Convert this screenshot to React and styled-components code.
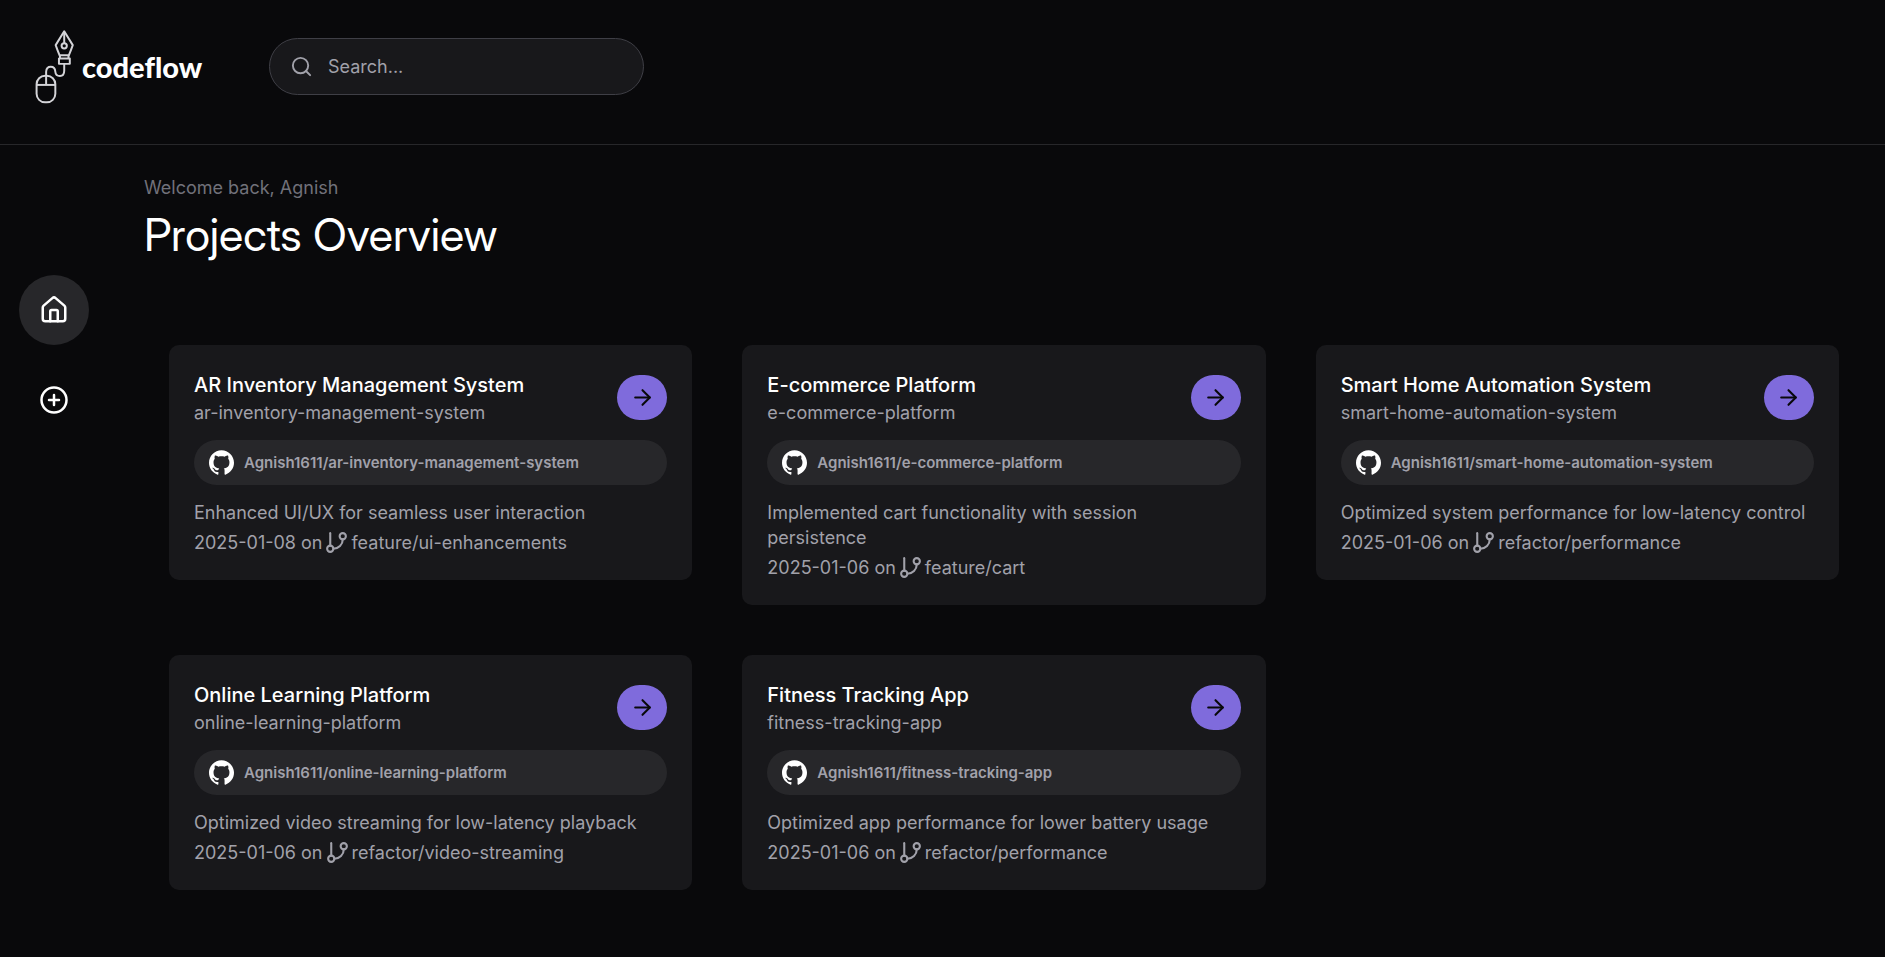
import React from "react";
import styled, { createGlobalStyle } from "styled-components";
import { ArrowRight, CirclePlus, GitBranch, House, Search } from "lucide-react";
import { SiGithub } from "react-icons/si";

const GlobalStyle = createGlobalStyle`
  *, *::before, *::after { box-sizing: border-box; }
  body {
    margin: 0;
    min-height: 100vh;
    background: #09090b;
    color: #fff;
    font-family: Inter, "Liberation Sans", sans-serif;
    font-size: 18px;
    line-height: 25px;
  }
  h1, h2, p { margin: 0; }
`;

const Header = styled.header`
  display: flex;
  align-items: center;
  padding: 29px 34px 40px;
  border-bottom: 1px solid #27272a;
`;

const Brand = styled.a`
  display: flex;
  align-items: center;
  gap: 5px;
  flex: 0 0 235px;
  color: #fff;
  text-decoration: none;
`;

const BrandMark = styled.svg`
  width: 43px;
  height: 75px;
  fill: none;
  stroke: #d4d4d8;
  stroke-width: 6;
  stroke-linejoin: round;
`;

const BrandName = styled.span`
  font-family: Lato, sans-serif;
  font-size: 29px;
  font-weight: 900;
  font-variant-ligatures: none;
`;

const SearchBox = styled.label`
  display: flex;
  align-items: center;
  gap: 15px;
  flex: 0 1 375px;
  height: 57px;
  padding: 0 20px;
  border: 1px solid #3f3f46;
  border-radius: 30px;
  background: #18181b;
  color: #a1a1aa;
`;

const SearchInput = styled.input`
  flex: 1;
  min-width: 0;
  padding: 0;
  border: 0;
  outline: 0;
  background: transparent;
  color: #fff;
  font: inherit;
  &::placeholder { color: #a1a1aa; opacity: 1; }
`;

const Body = styled.div`
  display: flex;
`;

const Sidebar = styled.nav`
  display: flex;
  flex-direction: column;
  align-items: center;
  gap: 20px;
  flex: 0 0 108px;
  padding-top: 130px;
`;

const NavLink = styled.a`
  display: flex;
  align-items: center;
  justify-content: center;
  width: 70px;
  height: 70px;
  border-radius: 50%;
  background: ${({ $active }) => ($active ? "#27272a" : "transparent")};
  color: #fff;
`;

const Main = styled.main`
  flex: 1;
  min-width: 0;
  padding: 30px 21px 40px 36px;
`;

const Welcome = styled.p`
  color: #71717a;
`;

const PageTitle = styled.h1`
  margin-top: 10px;
  font-family: "Inter Display", Roboto, sans-serif;
  font-size: 45px;
  line-height: 50px;
  font-weight: 400;
`;

const Grid = styled.div`
  display: grid;
  grid-template-columns: repeat(3, minmax(0, 1fr));
  align-items: start;
  gap: 50px;
  padding: 85px 25px 25px;
`;

const Card = styled.article`
  padding: 25px;
  border-radius: 10px;
  background: #18181b;
  color: #a1a1aa;
`;

const CardHeader = styled.div`
  display: flex;
  align-items: center;
  justify-content: space-between;
`;

const CardTitle = styled.h2`
  color: #fff;
  font-size: 20px;
  line-height: 30px;
  font-weight: 500;
`;

const OpenButton = styled.button`
  display: flex;
  align-items: center;
  justify-content: center;
  width: 50px;
  height: 45px;
  padding: 0;
  border: 0;
  border-radius: 25px;
  background: #7f6bdc;
  color: #09090b;
  cursor: pointer;
`;

const Repo = styled.a`
  display: flex;
  align-items: center;
  gap: 10px;
  height: 45px;
  margin: 15px 0;
  padding: 0 15px;
  border-radius: 25px;
  background: #27272a;
  color: #a1a1aa;
  font-size: 15px;
  font-weight: 600;
  text-decoration: none;
  svg { color: #fff; }
`;

const Commit = styled.p`
  display: flex;
  align-items: center;
  gap: 2px;
  margin-top: 5px;
`;

const projects = [
  { title: "AR Inventory Management System", slug: "ar-inventory-management-system", message: "Enhanced UI/UX for seamless user interaction", date: "2025-01-08", branch: "feature/ui-enhancements" },
  { title: "E-commerce Platform", slug: "e-commerce-platform", message: "Implemented cart functionality with session persistence", date: "2025-01-06", branch: "feature/cart" },
  { title: "Smart Home Automation System", slug: "smart-home-automation-system", message: "Optimized system performance for low-latency control", date: "2025-01-06", branch: "refactor/performance" },
  { title: "Online Learning Platform", slug: "online-learning-platform", message: "Optimized video streaming for low-latency playback", date: "2025-01-06", branch: "refactor/video-streaming" },
  { title: "Fitness Tracking App", slug: "fitness-tracking-app", message: "Optimized app performance for lower battery usage", date: "2025-01-06", branch: "refactor/performance" },
];

function Logo() {
  return (
    <BrandMark viewBox="40 28 129 228" aria-hidden="true">
      <path d="M131 35 157 77Q151 94 145 108H117Q111 94 105 77Z" />
      <path d="M131 37V71" />
      <circle cx="131" cy="79" r="8" />
      <path d="M118 108V118M144 108V118M115 118H148V134H115Z" />
      <path d="M131 134V155Q131 171 118 171Q105 171 104 158Q103 143 90 143Q77 143 76 158V198" />
      <rect x="47" y="170" width="57" height="81" rx="26" />
      <path d="M47 198H104" />
    </BrandMark>
  );
}

function ProjectCard({ project }) {
  const { title, slug, message, date, branch } = project;
  return (
    <Card>
      <CardHeader>
        <div>
          <CardTitle>{title}</CardTitle>
          <p>{slug}</p>
        </div>
        <OpenButton type="button" aria-label={`Open ${title}`}>
          <ArrowRight size={25} />
        </OpenButton>
      </CardHeader>
      <Repo href={`#${slug}`}>
        <SiGithub size={25} />
        <span>Agnish1611/{slug}</span>
      </Repo>
      <p>{message}</p>
      <Commit>
        <span>{date} on</span>
        <GitBranch size={25} />
        <span>{branch}</span>
      </Commit>
    </Card>
  );
}

export default function App() {
  return (
    <>
      <GlobalStyle />
      <Header>
        <Brand href="#home">
          <Logo />
          <BrandName>codeflow</BrandName>
        </Brand>
        <SearchBox>
          <Search size={23} />
          <SearchInput type="text" placeholder="Search..." aria-label="Search" />
        </SearchBox>
      </Header>
      <Body>
        <Sidebar>
          <NavLink href="#home" $active aria-label="Home">
            <House size={30} />
          </NavLink>
          <NavLink href="#new" aria-label="New project">
            <CirclePlus size={30} />
          </NavLink>
        </Sidebar>
        <Main>
          <Welcome>Welcome back, Agnish</Welcome>
          <PageTitle>Projects Overview</PageTitle>
          <Grid>
            {projects.map((project) => (
              <ProjectCard key={project.slug} project={project} />
            ))}
          </Grid>
        </Main>
      </Body>
    </>
  );
}
